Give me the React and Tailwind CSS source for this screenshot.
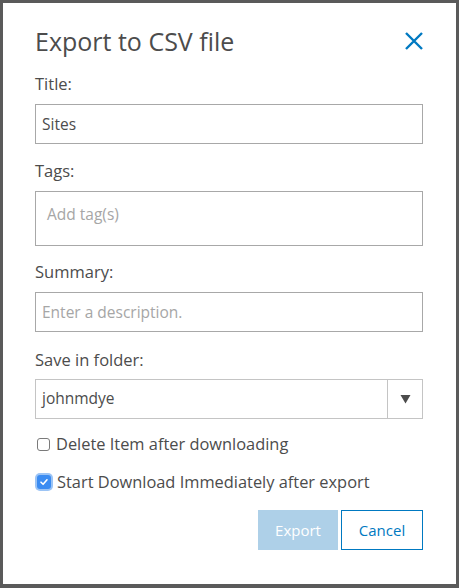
import { useState } from 'react';

const FONT = { fontFamily: '"Open Sans", Lato, sans-serif' };

function Label({ children, className = '' }) {
  return <div className={`h-5 leading-5 text-[16.5px] text-[#4c4c4c] ${className}`}>{children}</div>;
}

function Checkbox({ checked, label, className = '' }) {
  return (
    <label className={`flex items-center h-5 ${className}`}>
      {checked ? (
        <span className="w-[14px] h-[14px] ml-[2px] rounded-[3px] bg-[#3b8cf2] flex items-center justify-center shadow-[0_0_0_2px_#9cc4f5]">
          <svg width="10" height="10" viewBox="0 0 10 10" fill="none">
            <path d="M2 5.2 L4.1 7.3 L8 2.8" stroke="white" strokeWidth="1.6" strokeLinecap="round" strokeLinejoin="round" />
          </svg>
        </span>
      ) : (
        <span className="w-[13px] h-[13px] ml-[2px] rounded-[3px] border border-[#7a7a7a] bg-white" />
      )}
      <span className="ml-[6px] text-[16.4px] text-[#4c4c4c]">{label}</span>
    </label>
  );
}

export default function App() {
  const [title, setTitle] = useState('Sites');

  return (
    <div className="w-[459px] h-[588px] bg-[#5a5a5a] pt-[3px] pl-[3px] pr-[3px] pb-[4px]" style={FONT}>
      <div className="bg-white h-full pl-[32px] pr-[33px] pt-[22px]">
        <div className="flex items-center justify-between h-8">
          <h2 className="text-[25px] leading-8 text-[#4c4c4c]">Export to CSV file</h2>
          <svg width="20" height="20" viewBox="0 0 20 20" className="mr-[-1px]">
            <path d="M2 2 L18 18 M18 2 L2 18" stroke="#0079c1" strokeWidth="2.4" />
          </svg>
        </div>

        <Label className="mt-[17px]">Title:</Label>
        <input
          value={title}
          onChange={e => setTitle(e.target.value)}
          className="mt-[10px] block w-full h-10 border border-[#a8a8a8] px-[6px] text-[15.5px] text-[#4c4c4c] outline-none"
        />

        <Label className="mt-[17px]">Tags:</Label>
        <div className="mt-[10px] h-[55px] border border-[#a8a8a8] px-[11px] pt-[11px] text-[15.5px] text-[#a6a6a6]">
          Add tag(s)
        </div>

        <Label className="mt-[16px]">Summary:</Label>
        <input
          placeholder="Enter a description."
          className="mt-[10px] block w-full h-10 border border-[#a8a8a8] px-[6px] text-[15.5px] text-[#4c4c4c] placeholder:text-[#a6a6a6] outline-none"
        />

        <Label className="mt-[18px]">Save in folder:</Label>
        <div className="mt-[9px] h-10 border border-[#c4c4c4] flex">
          <div className="flex-1 flex items-center px-[6px] text-[15.5px] text-[#4c4c4c]">johnmdye</div>
          <div className="w-[35px] border-l border-[#c4c4c4] flex items-center justify-center">
            <svg width="11" height="10" viewBox="0 0 11 10">
              <path d="M0.5 1 L10.5 1 L5.5 9.5 Z" fill="#4c4c4c" />
            </svg>
          </div>
        </div>

        <Checkbox className="mt-[15px]" label="Delete Item after downloading" />
        <Checkbox className="mt-[18px]" checked label="Start Download Immediately after export" />

        <div className="mt-[18px] flex justify-end gap-[3px]">
          <button className="w-[80px] h-10 bg-[#aed0e8] text-white text-[15px]">Export</button>
          <button className="w-[82px] h-10 border border-[#0079c1] text-[#0079c1] text-[15px] bg-white">Cancel</button>
        </div>
      </div>
    </div>
  );
}
